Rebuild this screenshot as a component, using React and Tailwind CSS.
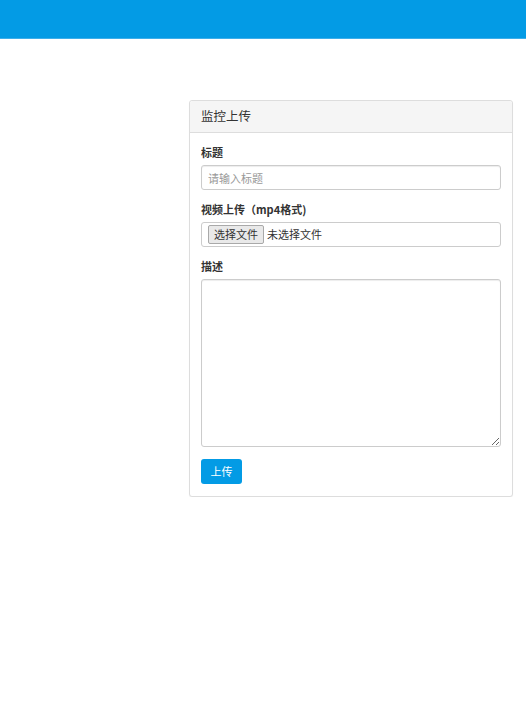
import React from "react";

function Field({ label, children, className = "" }) {
  return (
    <div className={className}>
      <label className="block text-[11px] leading-[16px] font-bold text-[#333] mb-[5px]">{label}</label>
      {children}
    </div>
  );
}

export default function App() {
  return (
    <div className="bg-white text-[#333] font-['Noto_Sans_CJK_SC','Liberation_Sans',sans-serif]">
      {/* top bar */}
      <header className="h-[39px] bg-[#039be5] border-b border-[#3daeea]" />

      <main className="pt-[61px] pl-[189px] pr-[13px]">
        <div className="border border-[#ddd] rounded-[3px] bg-white shadow-[0_1px_1px_rgba(0,0,0,0.05)]">
          <div className="h-[32px] bg-[#f5f5f5] border-b border-[#ddd] px-[11px] flex items-center text-[12.5px] text-[#333] rounded-t-[3px]">
            监控上传
          </div>

          <div className="px-[11px] pt-[11px] pb-[12px]">
            <Field label="标题" className="mb-[11px]">
              <input
                type="text"
                placeholder="请输入标题"
                className="block w-full h-[25px] border border-[#ccc] rounded-[3px] px-[6px] text-[11px] text-[#555] placeholder:text-[#999] outline-none shadow-[inset_0_1px_1px_rgba(0,0,0,0.075)]"
              />
            </Field>

            <Field label="视频上传（mp4格式)" className="mb-[11px]">
              <div className="h-[25px] border border-[#ccc] rounded-[3px] px-[6px] flex items-center text-[11px] text-[#333]">
                <span className="h-[19px] px-[5px] flex items-center border border-[#a9a9a9] bg-[#e9e9e9] rounded-[2px]">
                  选择文件
                </span>
                <span className="ml-[3px]">未选择文件</span>
              </div>
            </Field>

            <Field label="描述">
              <textarea className="block w-full h-[168px] border border-[#ccc] rounded-[3px] px-[6px] py-[4px] text-[11px] outline-none shadow-[inset_0_1px_1px_rgba(0,0,0,0.075)]" />
            </Field>

            <button className="mt-[12px] h-[25px] w-[41px] bg-[#039be5] text-white text-[11px] rounded-[3px] flex items-center justify-center">
              上传
            </button>
          </div>
        </div>
      </main>
    </div>
  );
}
